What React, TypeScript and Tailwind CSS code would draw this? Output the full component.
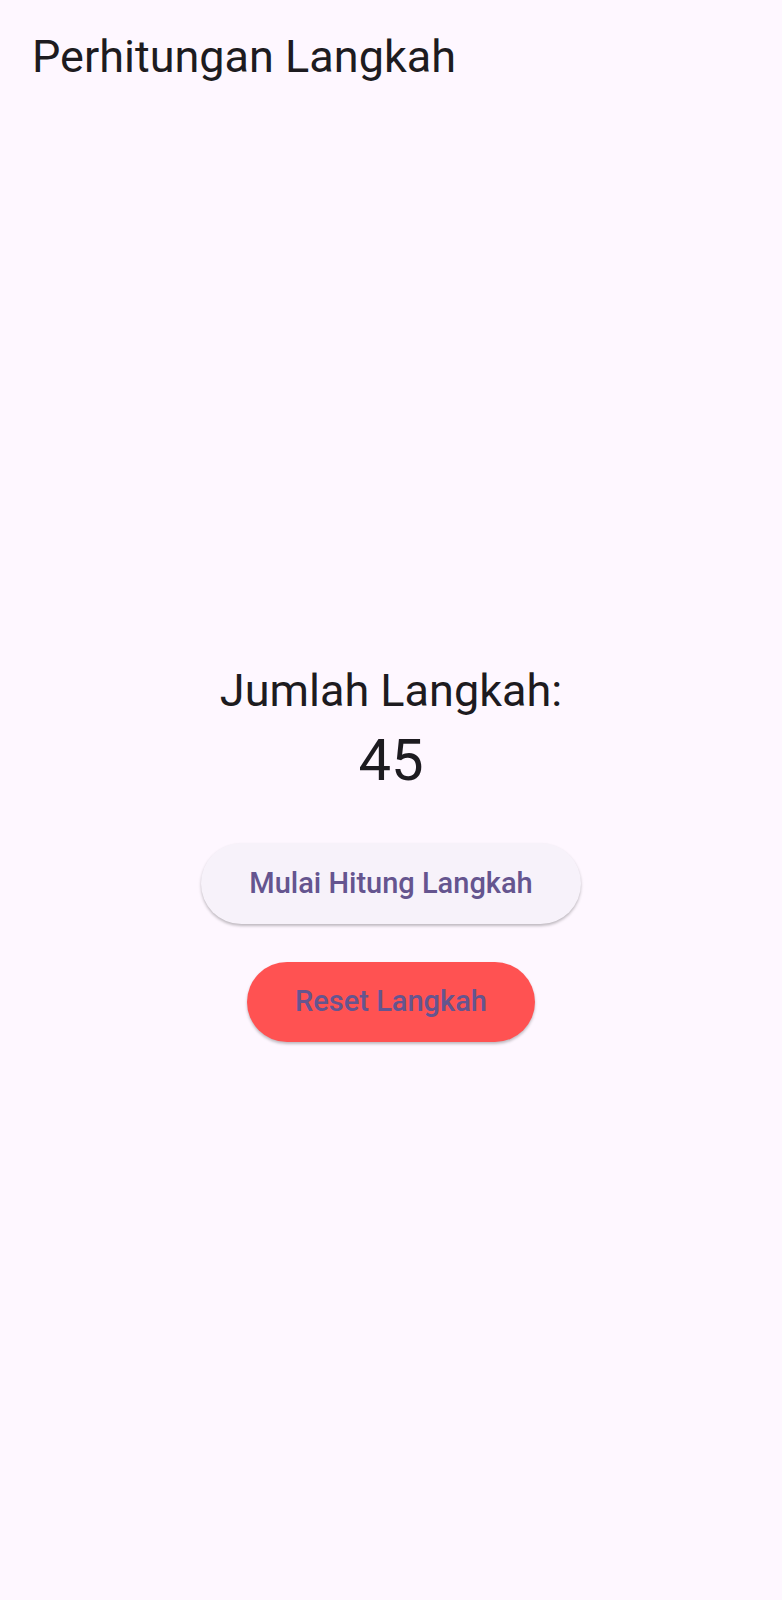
import React, { useState } from 'react';

export default function App() {
  const [steps, setSteps] = useState(45);

  return (
    <div
      className="flex flex-col h-[1600px] w-full bg-[#fef7ff] text-[#1d1b20]"
      style={{ fontFamily: 'Roboto, "Noto Sans", sans-serif' }}
    >
      {/* App bar */}
      <div className="h-[112px] flex items-center px-8 shrink-0">
        <h1 className="text-[45px] font-normal leading-none">Perhitungan Langkah</h1>
      </div>

      {/* Body */}
      <div className="flex-1 flex flex-col items-center justify-center pb-[11px]">
        <p className="text-[45px] leading-[64px]">Jumlah Langkah:</p>
        <p className="text-[58px] leading-[74px]">{steps}</p>
        <button
          onClick={() => setSteps(steps + 1)}
          className="mt-[46px] h-[81px] px-12 rounded-full bg-[#f7f2fa] text-[#65558f] text-[29px] font-medium shadow-[0_2px_3px_rgba(0,0,0,0.25)]"
        >
          Mulai Hitung Langkah
        </button>
        <button
          onClick={() => setSteps(0)}
          className="mt-[38px] h-[80px] px-12 rounded-full bg-[#ff5252] text-[#65558f] text-[29px] font-medium shadow-[0_2px_3px_rgba(0,0,0,0.25)]"
        >
          Reset Langkah
        </button>
      </div>
    </div>
  );
}
